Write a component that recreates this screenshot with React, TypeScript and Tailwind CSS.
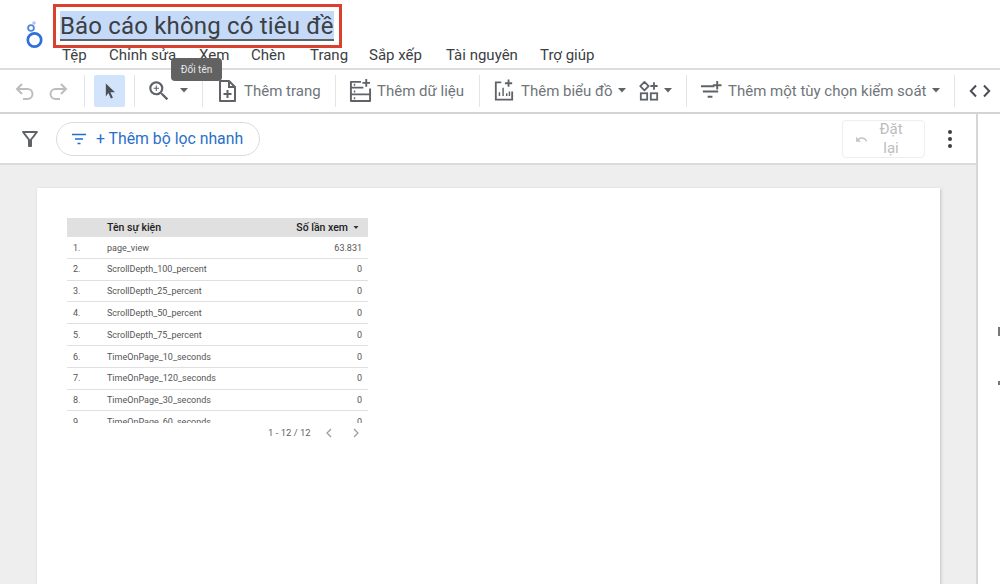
import React from "react";

const P = ({ d, size = 24, color = "#5f6368", className = "" }: { d: string; size?: number; color?: string; className?: string }) => (
  <svg width={size} height={size} viewBox="0 0 24 24" fill={color} className={className}><path d={d} /></svg>
);

const Caret = ({ className = "" }: { className?: string }) => (
  <svg width="8" height="5" viewBox="0 0 10 6" className={className}><path d="M0 0h10L5 5.5z" fill="#5f6368" /></svg>
);

const Divider = ({ className = "" }: { className?: string }) => <div className={`h-[32px] w-px shrink-0 bg-[#e4e4e4] ${className}`} />;

const Logo = () => (
  <svg width="24" height="34" viewBox="0 0 24 34" fill="none">
    <circle cx="12.5" cy="23" r="6.7" stroke="#2f6fdc" strokeWidth="2.7" />
    <circle cx="9" cy="11" r="2.9" stroke="#4f87e2" strokeWidth="1.8" />
    <circle cx="12" cy="6" r="1.8" fill="#c3bdea" />
  </svg>
);

const UndoArrow = ({ flip = false, className = "" }: { flip?: boolean; className?: string }) => (
  <svg width="24" height="24" viewBox="0 0 24 24" fill="none" stroke="#bdbdbd" strokeWidth="2" className={className} style={flip ? { transform: "scaleX(-1)" } : undefined}>
    <path d="M9 15L4 10l5-5" />
    <path d="M4 10h10.5a5 5 0 0 1 0 10H10" />
  </svg>
);

const DataIcon = () => (
  <svg width="23" height="25" viewBox="0 0 24 26" fill="none" stroke="#5f6368" strokeWidth="2">
    <path d="M12.5 4H2v6h13M2 10v7h20v-6M2 17v7h20v-7" strokeLinejoin="round" />
    <path d="M18 1v8M14 5h8" />
    <path d="M5 7h1.5M5 14h1.5M5 21h1.5" />
  </svg>
);

const ChartIcon = () => (
  <svg width="20" height="23" viewBox="0 0 22 24" fill="none" stroke="#5f6368" strokeWidth="2">
    <path d="M8 3H2v19h18v-9" />
    <path d="M16 0v8M12 4h8" />
    <path d="M6 18v-4M10 18V9M14 18v-3M17 18v-5" strokeWidth="1.6" />
  </svg>
);

const ControlsIcon = () => (
  <svg width="22" height="22" viewBox="0 0 23 23" fill="none" stroke="#5f6368" strokeWidth="2">
    <path d="M1 6.5h14M3 12h16M8 17.5h5" />
    <path d="M18 1v9M13.5 5.5h9" />
  </svg>
);

const ShapesIcon = () => (
  <svg width="20" height="22" viewBox="0 0 22 23" fill="none" stroke="#5f6368" strokeWidth="2">
    <path d="M6 1.5l4.6 4.6L6 10.7 1.4 6.1z" strokeLinejoin="round" />
    <rect x="2" y="14" width="7" height="7" />
    <rect x="13" y="14" width="7" height="7" />
    <path d="M16.5 2v8M12.5 6h8" />
  </svg>
);

const PageIcon = () => (
  <svg width="18" height="22" viewBox="0 0 18 22" fill="none" stroke="#5f6368" strokeWidth="2">
    <path d="M2 1h9l6 6v14H2z" strokeLinejoin="round" />
    <path d="M11 1v6h6" />
    <path d="M9.5 10v8M5.5 14h8" />
  </svg>
);

const FilterLines = () => (
  <svg width="16" height="12" viewBox="0 0 16 12" fill="none" stroke="#1a6fd8" strokeWidth="1.6">
    <path d="M1 1.5h14M4 6h8M6.5 10.5h3" />
  </svg>
);

const menu: [string, string][] = [
  ["Tệp", "w-[47px]"],
  ["Chỉnh sửa", "w-[90px]"],
  ["Xem", "w-[52px]"],
  ["Chèn", "w-[59px]"],
  ["Trang", "w-[59px]"],
  ["Sắp xếp", "w-[77px]"],
  ["Tài nguyên", "w-[94px]"],
  ["Trợ giúp", "w-[70px]"],
];

const rows: [string, string, string][] = [
  ["1.", "page_view", "63.831"],
  ["2.", "ScrollDepth_100_percent", "0"],
  ["3.", "ScrollDepth_25_percent", "0"],
  ["4.", "ScrollDepth_50_percent", "0"],
  ["5.", "ScrollDepth_75_percent", "0"],
  ["6.", "TimeOnPage_10_seconds", "0"],
  ["7.", "TimeOnPage_120_seconds", "0"],
  ["8.", "TimeOnPage_30_seconds", "0"],
  ["9.", "TimeOnPage_60_seconds", "0"],
];

export default function App() {
  return (
    <div className="relative flex h-[584px] w-[1000px] flex-col overflow-hidden bg-white font-['Roboto',sans-serif]">
      {/* Header */}
      <header className="relative h-[70px] shrink-0 border-b-2 border-[#dcdcdc]">
        <div className="flex h-full">
          <div className="ml-[22px] mt-[17px] w-[31px] shrink-0"><Logo /></div>
          <div className="flex flex-col">
            <div className="relative z-10 mt-[4px] flex h-[44px] w-[289px] items-start border-[3px] border-[#d9402e] pl-[4px] pt-[4px]">
              <span className="h-[30px] border-b-2 border-[#5f6368] bg-[#c5daf8] text-[24px] leading-[31px] tracking-[0.17px] text-[#3c4043]">Báo cáo không có tiêu đề</span>
            </div>
            <nav className="ml-[9px] flex text-[15px] leading-[14px] text-[#3c4043]">
              {menu.map(([m, w]) => <span key={m} className={w}>{m}</span>)}
            </nav>
          </div>
        </div>
        <div className="absolute left-[171px] top-[58px] z-20 flex h-[23px] w-[51px] items-center justify-center rounded-[4px] bg-[#626262] text-[10px] text-[#e8e8e8]">Đổi tên</div>
      </header>

      {/* Toolbar */}
      <div className="flex h-[44px] shrink-0 items-center border-b-2 border-[#d4d4d4] pb-[1px] text-[15px] text-[#70757a]">
        <UndoArrow className="ml-[13px]" />
        <UndoArrow flip className="ml-[9px]" />
        <Divider className="ml-[14px]" />
        <div className="ml-[9px] flex h-[32px] w-[31px] items-center justify-center rounded-[2px] bg-[#d2e3fc]">
          <P size={20} color="#4a4f55" d="M7 3l11 10.5h-5.5l3 6.5-2.4 1-3-6.6L7 18.5z" />
        </div>
        <Divider className="ml-[9px]" />
        <P className="ml-[11px]" size={26} color="#5f6368" d="M15.5 14h-.79l-.28-.27A6.47 6.47 0 0 0 16 9.5 6.5 6.5 0 1 0 9.5 16c1.61 0 3.09-.59 4.23-1.57l.27.28v.79l5 4.99L20.49 19l-4.99-5zm-6 0C7.01 14 5 11.99 5 9.5S7.01 5 9.5 5 14 7.01 14 9.5 11.99 14 9.5 14zM12 10h-2v2H9v-2H7V9h2V7h1v2h2v1z" />
        <Caret className="ml-[8px]" />
        <Divider className="ml-[14px]" />
        <div className="ml-[15px]"><PageIcon /></div>
        <span className="ml-[8px] w-[76px] whitespace-nowrap pt-[2px]">Thêm trang</span>
        <Divider className="ml-[15px]" />
        <div className="ml-[13px]"><DataIcon /></div>
        <span className="ml-[5px] w-[87px] whitespace-nowrap pt-[2px]">Thêm dữ liệu</span>
        <Divider className="ml-[15px]" />
        <div className="ml-[14px]"><ChartIcon /></div>
        <span className="ml-[7px] w-[92px] whitespace-nowrap pt-[2px]">Thêm biểu đồ</span>
        <Caret className="ml-[5px]" />
        <div className="ml-[13px]"><ShapesIcon /></div>
        <Caret className="ml-[5px]" />
        <Divider className="ml-[14px]" />
        <div className="ml-[13px]"><ControlsIcon /></div>
        <span className="ml-[6px] w-[198px] whitespace-nowrap pt-[2px]">Thêm một tùy chọn kiểm soát</span>
        <Caret className="ml-[6px]" />
        <Divider className="ml-[14px]" />
        <svg className="ml-[14px]" width="22" height="14" viewBox="0 0 22 14" fill="none" stroke="#4a4f55" strokeWidth="2"><path d="M7 1.5L1.8 7 7 12.5M15 1.5L20.2 7 15 12.5" /></svg>
      </div>

      <div className="flex min-h-0 flex-1">
        <div className="flex w-[978px] shrink-0 flex-col border-r-2 border-[#d6d6d6]">
          {/* Filter bar */}
          <div className="flex h-[51px] shrink-0 items-center border-b-2 border-[#dcdcdc]">
            <P className="ml-[18px]" size={24} color="#5f6368" d="M4.25 5.61C6.27 8.2 10 13 10 13v6c0 .55.45 1 1 1h2c.55 0 1-.45 1-1v-6s3.72-4.8 5.74-7.39A1 1 0 0 0 18.95 4H5.04a1 1 0 0 0-.79 1.61zM7 6h10l-5 6.5z" />
            <div className="ml-[14px] flex h-[34px] w-[204px] items-center rounded-full border border-[#dadce0] pl-[14px]">
              <FilterLines />
              <span className="ml-[9px] whitespace-nowrap text-[15.8px] text-[#2a6fc9]">+ Thêm bộ lọc nhanh</span>
            </div>
            <div className="ml-[582px] mt-[1px] flex h-[38px] w-[83px] items-center rounded-[4px] border border-[#eeeeee] pl-[12px]">
              <P size={13} color="#c4c4c4" d="M12.5 8c-2.65 0-5.05.99-6.9 2.6L2 7v9h9l-3.62-3.62c1.39-1.16 3.16-1.88 5.12-1.88 3.54 0 6.55 2.31 7.6 5.5l2.37-.78C21.08 11.03 17.15 8 12.5 8z" />
              <span className="ml-[8px] w-[30px] text-center text-[15px] leading-[19px] text-[#bdbdbd]">Đặt lại</span>
            </div>
            <div className="ml-[23px] flex flex-col gap-[3px]">
              <span className="h-[4px] w-[4px] rounded-full bg-[#3c4043]" />
              <span className="h-[4px] w-[4px] rounded-full bg-[#3c4043]" />
              <span className="h-[4px] w-[4px] rounded-full bg-[#3c4043]" />
            </div>
          </div>

          {/* Canvas */}
          <div className="min-h-0 flex-1 bg-[#eeeeee] pl-[37px] pt-[23px]">
            <div className="h-[500px] w-[903px] bg-white pl-[30px] pt-[30px] shadow-[1px_1px_3px_rgba(0,0,0,0.18)]">
              <div className="w-[301px]">
                <div className="flex h-[19px] items-center bg-[#e0e0e0] pl-[40px] pr-[9px] text-[10.5px] font-medium text-[#212121]">
                  <span className="flex-1">Tên sự kiện</span>
                  <span>Số lần xem</span>
                  <svg className="ml-[5px]" width="6" height="3" viewBox="0 0 5 3"><path d="M0 0h5L2.5 3z" fill="#333" /></svg>
                </div>
                <div className="h-[186px] overflow-hidden">
                  {rows.map(([n, name, v]) => (
                    <div key={n} className="flex h-[21.8px] items-center border-b border-[#e0e0e0] pl-[6px] pr-[6px] pt-[2px] text-[9px] text-[#555555]">
                      <span className="w-[34px]">{n}</span>
                      <span className="flex-1">{name}</span>
                      <span>{v}</span>
                    </div>
                  ))}
                </div>
                <div className="mt-[1px] flex h-[18px] items-center text-[9.5px] text-[#5f5f5f]">
                  <span className="ml-[201px]">1 - 12 / 12</span>
                  <svg className="ml-[14px]" width="8" height="10" viewBox="0 0 8 10" fill="none" stroke="#9a9a9a" strokeWidth="1.2"><path d="M6 1L2 5l4 4" /></svg>
                  <svg className="ml-[19px]" width="8" height="10" viewBox="0 0 8 10" fill="none" stroke="#9a9a9a" strokeWidth="1.2"><path d="M2 1l4 4-4 4" /></svg>
                </div>
              </div>
            </div>
          </div>
        </div>

        {/* Right panel */}
        <div className="relative flex-1 bg-white">
          <span className="absolute right-0 top-[213px] h-[9px] w-[2px] bg-[#777777]" />
          <span className="absolute right-0 top-[267px] h-[4px] w-[2px] bg-[#777777]" />
        </div>
      </div>
    </div>
  );
}
